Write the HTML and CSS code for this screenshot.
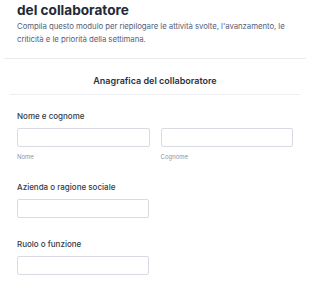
FILE: index.html
```html
<!DOCTYPE html>
<html lang="it">
<head>
<meta charset="utf-8">
<title>Modulo collaboratore</title>
<link rel="stylesheet" href="styles.css">
</head>
<body>
<div class="page">
  <header class="intro">
    <h1 class="title">del collaboratore</h1>
    <p class="desc">Compila questo modulo per riepilogare le attività svolte, l'avanzamento, le criticità e le priorità della settimana.</p>
  </header>
  <hr class="rule">
  <section class="section">
    <h2 class="section-title">Anagrafica del collaboratore</h2>
    <div class="fields">
      <div class="field">
        <label class="label">Nome e cognome</label>
        <div class="row">
          <div class="col">
            <input class="input" type="text">
            <span class="sublabel">Nome</span>
          </div>
          <div class="col">
            <input class="input" type="text">
            <span class="sublabel">Cognome</span>
          </div>
        </div>
      </div>
      <div class="field">
        <label class="label">Azienda o ragione sociale</label>
        <input class="input half" type="text">
      </div>
      <div class="field">
        <label class="label">Ruolo o funzione</label>
        <input class="input half" type="text">
      </div>
    </div>
  </section>
</div>
</body>
</html>
```

FILE: styles.css
```css
* { box-sizing: border-box; }
html, body { margin: 0; padding: 0; background: #fff; }
body { font-family: Inter, "Noto Sans", sans-serif; color: #2d3340; }
.page { width: 310px; }
.intro { padding: 0 17px; }
.title {
  margin: 0;
  padding-top: 2px;
  font-size: 13.6px;
  line-height: 16px;
  font-weight: 700;
  color: #232935;
}
.desc {
  margin: 2px 0 0;
  font-size: 7.8px;
  line-height: 13px;
  color: #56607a;
  letter-spacing: -0.05px;
}
.rule {
  margin: 12px 4px 0;
  border: 0;
  border-top: 1px solid #e9eaee;
  height: 0;
}
.section-title {
  margin: 16px 10px 0;
  padding-bottom: 7px;
  border-bottom: 1px solid #eeeff2;
  text-align: center;
  font-size: 9px;
  line-height: 12px;
  font-weight: 600;
  color: #2d3340;
}
.fields {
  padding: 15px 17px 0;
  display: flex;
  flex-direction: column;
  gap: 20px;
}
.field { display: flex; flex-direction: column; }
.label {
  font-size: 8px;
  line-height: 12px;
  font-weight: 500;
  color: #343a46;
  margin-bottom: 6px;
}
.row { display: flex; gap: 11px; }
.col { flex: 1; display: flex; flex-direction: column; }
.input {
  display: block;
  height: 19px;
  width: 100%;
  margin: 0;
  padding: 0 6px;
  border: 1px solid #d8dbe1;
  border-radius: 2px;
  background: #fff;
}
.input.half { width: 132px; }
.sublabel {
  margin-top: 6px;
  font-size: 6px;
  line-height: 8px;
  color: #8c93a0;
}
```
